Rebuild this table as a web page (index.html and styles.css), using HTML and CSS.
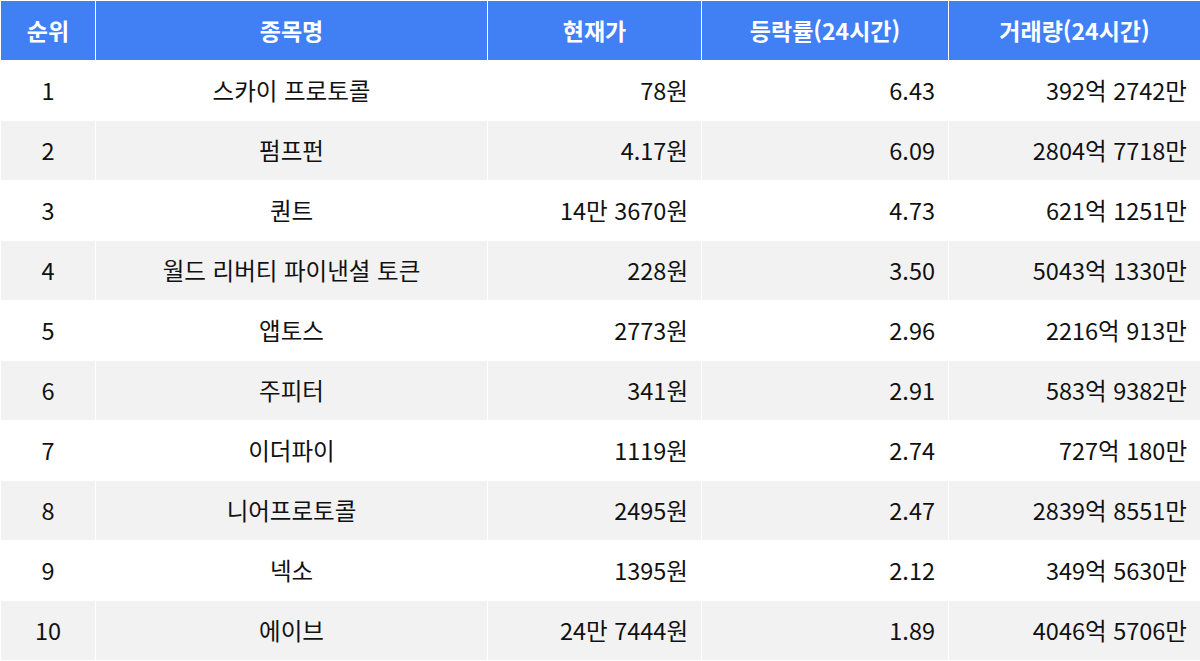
FILE: index.html
```html
<!DOCTYPE html>
<html lang="ko">
<head>
<meta charset="utf-8">
<link rel="stylesheet" href="styles.css">
</head>
<body>
<table class="rank">
  <colgroup>
    <col class="c1"><col class="c2"><col class="c3"><col class="c4"><col class="c5">
  </colgroup>
  <thead>
    <tr><th>순위</th><th>종목명</th><th>현재가</th><th>등락률(24시간)</th><th>거래량(24시간)</th></tr>
  </thead>
  <tbody>
    <tr><td class="ctr">1</td><td class="ctr">스카이 프로토콜</td><td class="num">78원</td><td class="num">6.43</td><td class="num">392억 2742만</td></tr>
    <tr><td class="ctr">2</td><td class="ctr">펌프펀</td><td class="num">4.17원</td><td class="num">6.09</td><td class="num">2804억 7718만</td></tr>
    <tr><td class="ctr">3</td><td class="ctr">퀀트</td><td class="num">14만 3670원</td><td class="num">4.73</td><td class="num">621억 1251만</td></tr>
    <tr><td class="ctr">4</td><td class="ctr">월드 리버티 파이낸셜 토큰</td><td class="num">228원</td><td class="num">3.50</td><td class="num">5043억 1330만</td></tr>
    <tr><td class="ctr">5</td><td class="ctr">앱토스</td><td class="num">2773원</td><td class="num">2.96</td><td class="num">2216억 913만</td></tr>
    <tr><td class="ctr">6</td><td class="ctr">주피터</td><td class="num">341원</td><td class="num">2.91</td><td class="num">583억 9382만</td></tr>
    <tr><td class="ctr">7</td><td class="ctr">이더파이</td><td class="num">1119원</td><td class="num">2.74</td><td class="num">727억 180만</td></tr>
    <tr><td class="ctr">8</td><td class="ctr">니어프로토콜</td><td class="num">2495원</td><td class="num">2.47</td><td class="num">2839억 8551만</td></tr>
    <tr><td class="ctr">9</td><td class="ctr">넥소</td><td class="num">1395원</td><td class="num">2.12</td><td class="num">349억 5630만</td></tr>
    <tr><td class="ctr">10</td><td class="ctr">에이브</td><td class="num">24만 7444원</td><td class="num">1.89</td><td class="num">4046억 5706만</td></tr>
  </tbody>
</table>
</body>
</html>
```
FILE: styles.css
```css
html, body {
  margin: 0;
  padding: 0;
  background: #fff;
}
body {
  font-family: "Noto Sans CJK KR", "Noto Sans", sans-serif;
  color: #111;
}
.rank {
  width: 1200px;
  border-collapse: collapse;
  table-layout: fixed;
  font-size: 23.5px;
}
.c1 { width: 95px; }
.c2 { width: 392px; }
.c3 { width: 214px; }
.c4 { width: 247px; }
.c5 { width: 252px; }
.rank th, .rank td {
  border: 1px solid #fff;
  height: 60px;
  padding: 0 13px;
  box-sizing: border-box;
  line-height: 1;
  white-space: nowrap;
}
.rank th {
  background: #4080f4;
  color: #fff;
  font-weight: 700;
  font-size: 23px;
  text-align: center;
}
.rank tbody tr:nth-child(even) td {
  background: #f2f2f2;
}
.ctr { text-align: center; }
.num { text-align: right; }
```
